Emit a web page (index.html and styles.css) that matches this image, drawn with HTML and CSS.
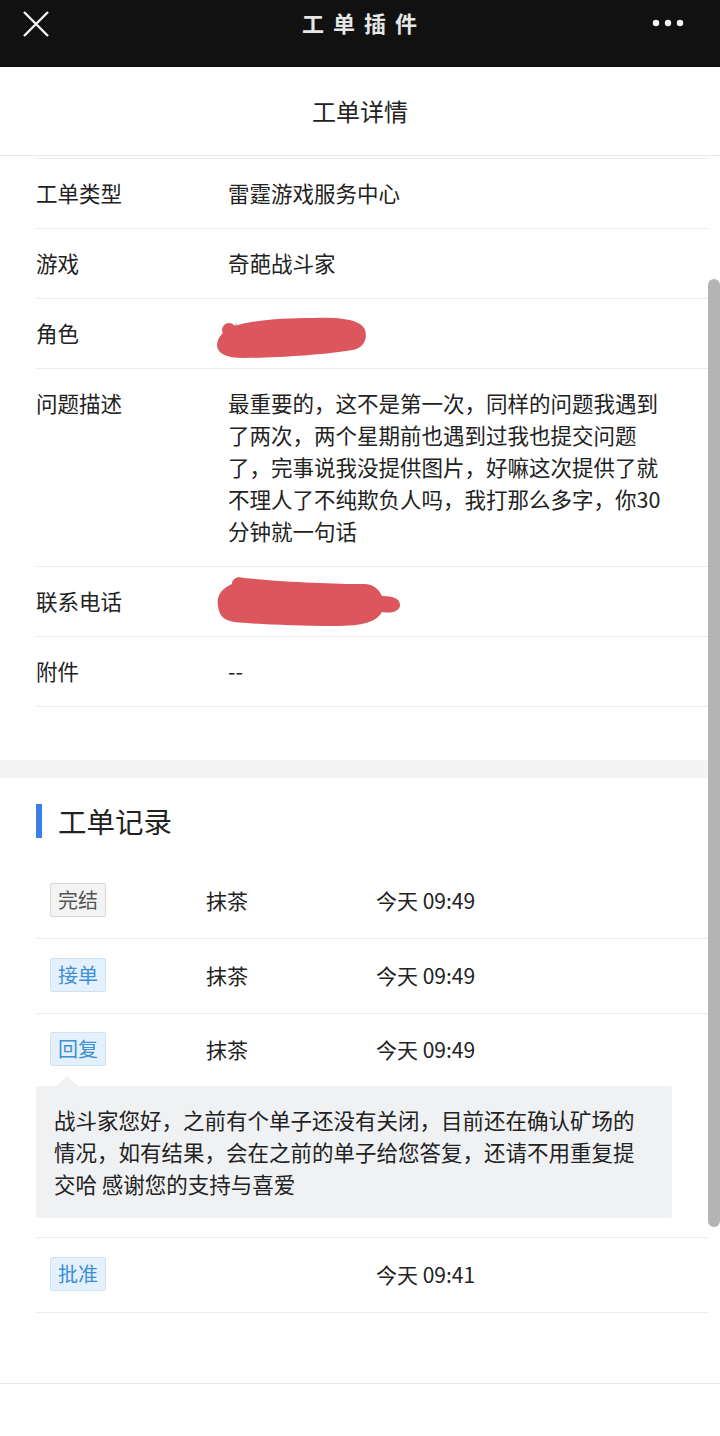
FILE: index.html
```html
<!DOCTYPE html>
<html lang="zh-CN">
<head>
    <meta charset="UTF-8">
    <meta name="viewport" content="width=device-width, initial-scale=1.0">
    <title>工单插件</title>
    <link rel="stylesheet" href="styles.css">
</head>
<body>

    <!-- Top bar -->
    <div class="topbar">
        <svg class="close-icon" width="30" height="30" viewBox="0 0 30 30">
            <path d="M3 3 L27 27 M27 3 L3 27" stroke="#f2f2f2" stroke-width="2.4" fill="none"/>
        </svg>
        <div class="topbar-title">工单插件</div>
        <svg class="more-icon" width="34" height="10" viewBox="0 0 34 10">
            <circle cx="5" cy="5" r="3.2" fill="#f2f2f2"/>
            <circle cx="17" cy="5" r="3.2" fill="#f2f2f2"/>
            <circle cx="29" cy="5" r="3.2" fill="#f2f2f2"/>
        </svg>
    </div>

    <div class="page">
        <div class="page-header">工单详情</div>

        <!-- Detail rows -->
        <div class="detail-list">
            <div class="detail-row">
                <div class="detail-label">工单类型</div>
                <div class="detail-value">雷霆游戏服务中心</div>
            </div>
            <div class="detail-row">
                <div class="detail-label">游戏</div>
                <div class="detail-value">奇葩战斗家</div>
            </div>
            <div class="detail-row">
                <div class="detail-label">角色</div>
                <div class="detail-value">
                    <span class="hidden-text">角</span>
                    <svg class="redact redact-role" width="160" height="48" viewBox="0 0 160 48">
                        <path d="M4 34 C4 24 12 18 22 14 C40 8 70 6 100 6 C125 5 148 7 152 18 C155 28 150 36 140 38 C110 43 60 46 30 46 C14 46 5 42 4 34 Z" fill="#db575d"/>
                        <circle cx="16" cy="18" r="7" fill="#db575d"/>
                    </svg>
                </div>
            </div>
            <div class="detail-row">
                <div class="detail-label">问题描述</div>
                <div class="detail-value">最重要的，这不是第一次，同样的问题我遇到了两次，两个星期前也遇到过我也提交问题了，完事说我没提供图片，好嘛这次提供了就不理人了不纯欺负人吗，我打那么多字，你30分钟就一句话</div>
            </div>
            <div class="detail-row">
                <div class="detail-label">联系电话</div>
                <div class="detail-value">
                    <svg class="redact redact-phone" width="190" height="56" viewBox="0 0 190 56">
                        <path d="M4 32 C2 22 8 14 18 10 C18 4 24 2 30 4 C70 8 120 10 150 10 C160 10 165 16 168 22 C180 22 186 25 186 31 C186 37 178 40 168 38 C162 48 150 52 120 52 C80 52 40 50 20 48 C8 46 5 40 4 32 Z" fill="#db575d"/>
                    </svg>
                </div>
            </div>
            <div class="detail-row">
                <div class="detail-label">附件</div>
                <div class="detail-value">--</div>
            </div>
        </div>

        <div class="divider-band"></div>

        <!-- Records -->
        <div class="records">
            <h2 class="records-title">工单记录</h2>

            <div class="record">
                <div class="record-line">
                    <span class="tag tag-grey">完结</span>
                    <span class="record-name">抹茶</span>
                    <span class="record-time">今天 09:49</span>
                </div>
            </div>
            <div class="record">
                <div class="record-line">
                    <span class="tag">接单</span>
                    <span class="record-name">抹茶</span>
                    <span class="record-time">今天 09:49</span>
                </div>
            </div>
            <div class="record record-reply">
                <div class="record-line">
                    <span class="tag">回复</span>
                    <span class="record-name">抹茶</span>
                    <span class="record-time">今天 09:49</span>
                </div>
                <div class="reply-bubble">战斗家您好，之前有个单子还没有关闭，目前还在确认矿场的情况，如有结果，会在之前的单子给您答复，还请不用重复提交哈 感谢您的支持与喜爱</div>
            </div>
            <div class="record">
                <div class="record-line">
                    <span class="tag">批准</span>
                    <span class="record-name"></span>
                    <span class="record-time">今天 09:41</span>
                </div>
            </div>
        </div>

        <div class="page-footer"></div>
    </div>

    <!-- Scrollbar thumb -->
    <div class="scroll-thumb"></div>

</body>
</html>
```

FILE: styles.css
```css
body {
    margin: 0;
    padding: 0;
    background: #fff;
    font-family: 'Noto Sans CJK SC', 'Noto Sans', sans-serif;
    color: #222;
    position: relative;
    min-height: 1436px;
}

/* Top bar */
.topbar {
    height: 67px;
    background: #111;
    display: flex;
    align-items: flex-start;
    justify-content: space-between;
    padding: 0 35px 0 21px;
    box-sizing: border-box;
}

.close-icon {
    margin-top: 9px;
}

.topbar-title {
    color: #e6e6e6;
    font-size: 22px;
    font-weight: bold;
    letter-spacing: 9px;
    padding-left: 9px;
    margin-top: 4px;
    line-height: 36px;
    margin-left: 17px;
}

.more-icon {
    margin-top: 18px;
}

/* Page header */
.page-header {
    height: 88px;
    line-height: 88px;
    text-align: center;
    font-size: 24px;
    color: #222;
    border-bottom: 1px solid #e6e6e6;
}

/* Details */
.detail-list {
    margin: 0 12px 0 36px;
    padding-top: 2px;
}

.detail-row {
    display: flex;
    border-top: 1px solid #ededed;
    padding: 18px 0 19px;
    font-size: 21.5px;
    line-height: 32px;
}

.detail-row:last-child {
    border-bottom: 1px solid #ededed;
}

.detail-label {
    width: 192px;
    flex-shrink: 0;
    color: #222;
}

.detail-value {
    width: 440px;
    color: #222;
    position: relative;
}

.hidden-text {
    color: #bbb;
}

.redact {
    position: absolute;
}

.redact-role {
    left: -15px;
    top: -5px;
}

.redact-phone {
    left: -14px;
    top: -11px;
}

.divider-band {
    height: 18px;
    background: #f4f4f5;
    margin-top: 53px;
}

/* Records */
.records {
    margin: 0 12px 0 36px;
    padding-top: 26px;
}

.records-title {
    margin: 0 0 26px;
    font-size: 28.5px;
    font-weight: normal;
    line-height: 34px;
    border-left: 6px solid #3b7de9;
    padding-left: 16px;
    color: #222;
}

.record {
    border-bottom: 1px solid #ededed;
}

.record-line {
    display: flex;
    align-items: center;
    box-sizing: border-box;
    height: 74px;
    padding: 0 0 3px 14px;
    font-size: 21px;
}

.tag {
    display: inline-block;
    box-sizing: border-box;
    width: 56px;
    height: 34px;
    line-height: 32px;
    text-align: center;
    font-size: 20px;
    color: #3d8ed5;
    background: #e4f1fc;
    border: 1px solid #cfe3f5;
    border-radius: 2px;
}

.tag-grey {
    color: #555;
    background: #f3f3f3;
    border-color: #d9d9d9;
}

.record-name {
    width: 114px;
    margin-left: 100px;
}

.record-time {
    margin-left: 56px;
}

.record-reply {
    padding-bottom: 19px;
}

.record-reply .record-line {
    height: 72px;
}

.reply-bubble {
    position: relative;
    width: 636px;
    box-sizing: border-box;
    background: #f0f1f3;
    border-radius: 3px;
    padding: 18px 20px 18px 18px;
    font-size: 21.5px;
    line-height: 32px;
    color: #222;
}

.reply-bubble::before {
    content: "";
    position: absolute;
    top: -10px;
    left: 20px;
    border-left: 11px solid transparent;
    border-right: 11px solid transparent;
    border-bottom: 10px solid #f0f1f3;
}

.page-footer {
    height: 70px;
    border-bottom: 1px solid #e6e6e6;
}

/* Scrollbar */
.scroll-thumb {
    position: absolute;
    top: 279px;
    left: 708px;
    width: 12px;
    height: 948px;
    border-radius: 6px;
    background: #b4b4b4;
}
```
